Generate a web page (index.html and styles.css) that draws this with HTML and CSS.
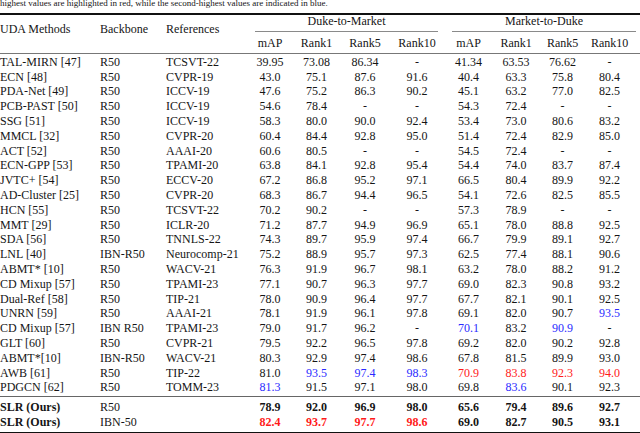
FILE: index.html
```html
<!DOCTYPE html>
<html lang="en">
<head>
<meta charset="utf-8">
<title>UDA Methods comparison</title>
<link rel="stylesheet" href="styles.css">
</head>
<body>
<p class="caption">highest values are highlighted in red, while the second-highest values are indicated in blue.</p>
<table class="results">
  <colgroup>
    <col class="c-method"><col class="c-backbone"><col class="c-ref">
    <col class="c1"><col class="c2"><col class="c3"><col class="c4">
    <col class="c5"><col class="c6"><col class="c7"><col class="c8">
  </colgroup>
  <thead>
    <tr class="h1">
      <th rowspan="2" class="txt">UDA Methods</th>
      <th rowspan="2" class="txt">Backbone</th>
      <th rowspan="2" class="txt">References</th>
      <th colspan="4" class="group"><div class="grouplabel">Duke-to-Market</div></th>
      <th colspan="4" class="group g2"><div class="grouplabel">Market-to-Duke</div></th>
    </tr>
    <tr class="h2">
      <th>mAP</th><th>Rank1</th><th>Rank5</th><th>Rank10</th>
      <th>mAP</th><th>Rank1</th><th>Rank5</th><th class="last">Rank10</th>
    </tr>
  </thead>
  <tbody class="others">
    <tr class="first"><td>TAL-MIRN [47]</td><td>R50</td><td>TCSVT-22</td><td>39.95</td><td>73.08</td><td>86.34</td><td>-</td><td>41.34</td><td>63.53</td><td>76.62</td><td class="last">-</td></tr>
    <tr><td>ECN [48]</td><td>R50</td><td>CVPR-19</td><td>43.0</td><td>75.1</td><td>87.6</td><td>91.6</td><td>40.4</td><td>63.3</td><td>75.8</td><td class="last">80.4</td></tr>
    <tr><td>PDA-Net [49]</td><td>R50</td><td>ICCV-19</td><td>47.6</td><td>75.2</td><td>86.3</td><td>90.2</td><td>45.1</td><td>63.2</td><td>77.0</td><td class="last">82.5</td></tr>
    <tr><td>PCB-PAST [50]</td><td>R50</td><td>ICCV-19</td><td>54.6</td><td>78.4</td><td>-</td><td>-</td><td>54.3</td><td>72.4</td><td>-</td><td class="last">-</td></tr>
    <tr><td>SSG [51]</td><td>R50</td><td>ICCV-19</td><td>58.3</td><td>80.0</td><td>90.0</td><td>92.4</td><td>53.4</td><td>73.0</td><td>80.6</td><td class="last">83.2</td></tr>
    <tr><td>MMCL [32]</td><td>R50</td><td>CVPR-20</td><td>60.4</td><td>84.4</td><td>92.8</td><td>95.0</td><td>51.4</td><td>72.4</td><td>82.9</td><td class="last">85.0</td></tr>
    <tr><td>ACT [52]</td><td>R50</td><td>AAAI-20</td><td>60.6</td><td>80.5</td><td>-</td><td>-</td><td>54.5</td><td>72.4</td><td>-</td><td class="last">-</td></tr>
    <tr><td>ECN-GPP [53]</td><td>R50</td><td>TPAMI-20</td><td>63.8</td><td>84.1</td><td>92.8</td><td>95.4</td><td>54.4</td><td>74.0</td><td>83.7</td><td class="last">87.4</td></tr>
    <tr><td>JVTC+ [54]</td><td>R50</td><td>ECCV-20</td><td>67.2</td><td>86.8</td><td>95.2</td><td>97.1</td><td>66.5</td><td>80.4</td><td>89.9</td><td class="last">92.2</td></tr>
    <tr><td>AD-Cluster [25]</td><td>R50</td><td>CVPR-20</td><td>68.3</td><td>86.7</td><td>94.4</td><td>96.5</td><td>54.1</td><td>72.6</td><td>82.5</td><td class="last">85.5</td></tr>
    <tr><td>HCN [55]</td><td>R50</td><td>TCSVT-22</td><td>70.2</td><td>90.2</td><td>-</td><td>-</td><td>57.3</td><td>78.9</td><td>-</td><td class="last">-</td></tr>
    <tr><td>MMT [29]</td><td>R50</td><td>ICLR-20</td><td>71.2</td><td>87.7</td><td>94.9</td><td>96.9</td><td>65.1</td><td>78.0</td><td>88.8</td><td class="last">92.5</td></tr>
    <tr><td>SDA [56]</td><td>R50</td><td>TNNLS-22</td><td>74.3</td><td>89.7</td><td>95.9</td><td>97.4</td><td>66.7</td><td>79.9</td><td>89.1</td><td class="last">92.7</td></tr>
    <tr><td>LNL [40]</td><td>IBN-R50</td><td>Neurocomp-21</td><td>75.2</td><td>88.9</td><td>95.7</td><td>97.3</td><td>62.5</td><td>77.4</td><td>88.1</td><td class="last">90.6</td></tr>
    <tr><td>ABMT* [10]</td><td>R50</td><td>WACV-21</td><td>76.3</td><td>91.9</td><td>96.7</td><td>98.1</td><td>63.2</td><td>78.0</td><td>88.2</td><td class="last">91.2</td></tr>
    <tr><td>CD Mixup [57]</td><td>R50</td><td>TPAMI-23</td><td>77.1</td><td>90.7</td><td>96.3</td><td>97.7</td><td>69.0</td><td>82.3</td><td>90.8</td><td class="last">93.2</td></tr>
    <tr><td>Dual-Ref [58]</td><td>R50</td><td>TIP-21</td><td>78.0</td><td>90.9</td><td>96.4</td><td>97.7</td><td>67.7</td><td>82.1</td><td>90.1</td><td class="last">92.5</td></tr>
    <tr><td>UNRN [59]</td><td>R50</td><td>AAAI-21</td><td>78.1</td><td>91.9</td><td>96.1</td><td>97.8</td><td>69.1</td><td>82.0</td><td>90.7</td><td class="last second">93.5</td></tr>
    <tr><td>CD Mixup [57]</td><td>IBN R50</td><td>TPAMI-23</td><td>79.0</td><td>91.7</td><td>96.2</td><td>-</td><td class="second">70.1</td><td>83.2</td><td class="second">90.9</td><td class="last">-</td></tr>
    <tr><td>GLT [60]</td><td>R50</td><td>CVPR-21</td><td>79.5</td><td>92.2</td><td>96.5</td><td>97.8</td><td>69.2</td><td>82.0</td><td>90.2</td><td class="last">92.8</td></tr>
    <tr><td>ABMT*[10]</td><td>IBN-R50</td><td>WACV-21</td><td>80.3</td><td>92.9</td><td>97.4</td><td>98.6</td><td>67.8</td><td>81.5</td><td>89.9</td><td class="last">93.0</td></tr>
    <tr><td>AWB [61]</td><td>R50</td><td>TIP-22</td><td>81.0</td><td class="second">93.5</td><td class="second">97.4</td><td class="second">98.3</td><td class="best">70.9</td><td class="best">83.8</td><td class="best">92.3</td><td class="last best">94.0</td></tr>
    <tr class="lastrow"><td>PDGCN [62]</td><td>R50</td><td>TOMM-23</td><td class="second">81.3</td><td>91.5</td><td>97.1</td><td>98.0</td><td>69.8</td><td class="second">83.6</td><td>90.1</td><td class="last">92.3</td></tr>
  </tbody>
  <tbody class="ours">
    <tr class="first"><td class="name">SLR (Ours)</td><td>R50</td><td></td><td>78.9</td><td>92.0</td><td>96.9</td><td>98.0</td><td>65.6</td><td>79.4</td><td>89.6</td><td class="last">92.7</td></tr>
    <tr class="lastrow"><td class="name">SLR (Ours)</td><td>IBN-50</td><td></td><td class="best">82.4</td><td class="best">93.7</td><td class="best">97.7</td><td class="best">98.6</td><td>69.0</td><td>82.7</td><td>90.5</td><td class="last">93.1</td></tr>
  </tbody>
</table>
</body>
</html>
```
FILE: styles.css
```css
html, body {
  margin: 0;
  padding: 0;
  background: #ffffff;
}

body {
  font-family: "Liberation Serif", "Times New Roman", serif;
  color: #151515;
  width: 640px;
  height: 433px;
  overflow: hidden;
}

.caption {
  margin: -2px 0 5px 0;
  font-size: 9px;
  line-height: 10px;
  height: 10px;
  white-space: nowrap;
}

.results {
  width: 640px;
  border-collapse: collapse;
  table-layout: fixed;
  font-size: 12px;
  border-top: 2px solid #111;
  border-bottom: 2px solid #111;
}

.c-method { width: 100px; }
.c-backbone { width: 66px; }
.c-ref { width: 81px; }
.c1 { width: 46px; }
.c2 { width: 47px; }
.c3 { width: 50px; }
.c4 { width: 54px; }
.c5 { width: 49px; }
.c6 { width: 46px; }
.c7 { width: 47px; }
.c8 { width: 54px; }

.results th,
.results td {
  padding: 0;
  font-weight: normal;
  line-height: 14.8px;
  text-align: center;
  white-space: nowrap;
}

.results td:nth-child(-n+3),
.results th.txt {
  text-align: left;
}

.results .last {
  padding-right: 7px;
}

.h1 th.txt {
  vertical-align: middle;
  padding-bottom: 9px;
}

.h1 th.group {
  padding-top: 0;
}

.grouplabel {
  margin: 0 6px 0 8px;
  line-height: 12px;
  padding-bottom: 4px;
  border-bottom: 1.5px solid #8a8a8a;
}

.g2 .grouplabel {
  margin: 0 4px 0 8px;
}

.h2 th {
  padding-top: 4px;
  padding-bottom: 2px;
}

thead .h2 {
  border-bottom: 1.5px solid #777;
}

tbody .first td {
  padding-top: 1px;
}

.others .lastrow td {
  padding-bottom: 1px;
}

.ours {
  border-top: 1.5px solid #666;
}

.ours td {
  font-weight: bold;
  line-height: 15px;
}

.ours td:nth-child(2) {
  font-weight: normal;
}

.ours .first td {
  padding-top: 3px;
}

.ours .lastrow td {
  padding-bottom: 2px;
}

.best {
  color: #ff1a1a;
}

.second {
  color: #2a2aff;
}
```
